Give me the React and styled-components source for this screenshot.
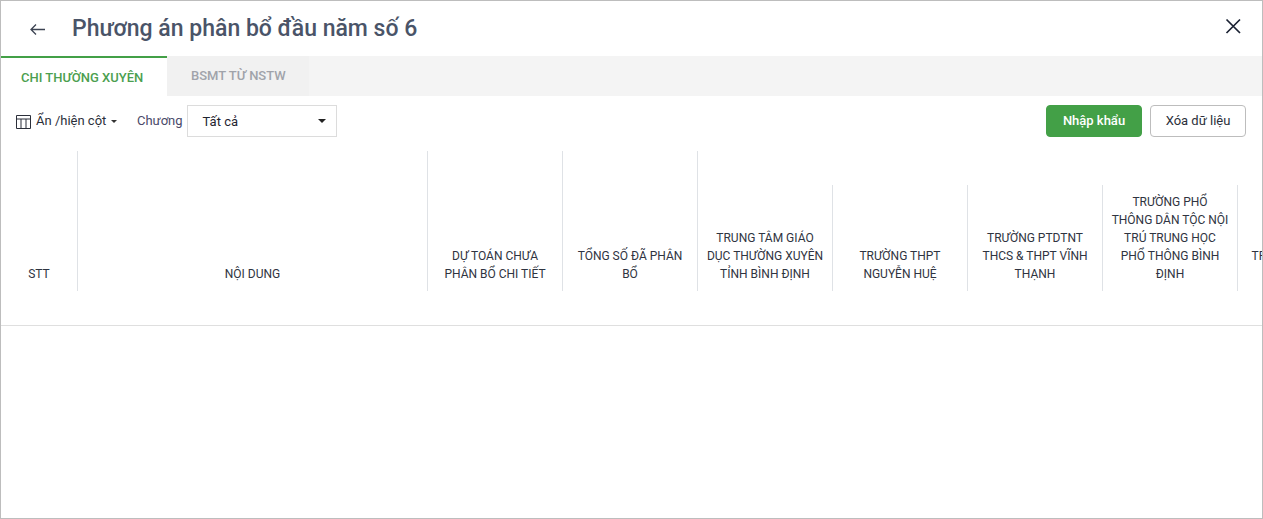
import React from 'react';
import styled, { createGlobalStyle } from 'styled-components';

const GlobalStyle = createGlobalStyle`
  html, body {
    margin: 0;
    padding: 0;
    background: #fff;
    font-family: Roboto, "Liberation Sans", sans-serif;
  }
`;

const Dialog = styled.div`
  box-sizing: border-box;
  width: 1263px;
  height: 519px;
  border: 1px solid #bdbdbd;
  background: #fff;
  overflow: hidden;
  display: flex;
  flex-direction: column;
`;

const Header = styled.header`
  height: 55px;
  flex: none;
  display: flex;
  align-items: center;
  padding: 0 20px 0 28px;
`;

const IconButton = styled.button`
  border: 0;
  padding: 0;
  margin-bottom: ${p => p.$lift || 0}px;
  background: none;
  display: flex;
  cursor: pointer;
`;

const Title = styled.h1`
  margin: 0 0 0 25px;
  flex: 1;
  font-size: 23px;
  font-weight: 500;
  line-height: 30px;
  color: #4a5468;
`;

const Tabs = styled.div`
  height: 40px;
  flex: none;
  display: flex;
  background: #f4f4f4;
`;

const Tab = styled.div`
  box-sizing: border-box;
  width: ${p => p.$width}px;
  padding: ${p => (p.$active ? '12px 0 0 20px' : '12px 0 0 24px')};
  font-size: 13px;
  font-weight: 500;
  line-height: 16px;
  color: ${p => (p.$active ? '#4c9f50' : '#a0a3aa')};
  background: ${p => (p.$active ? '#fff' : '#f1f1f1')};
  border-top: ${p => (p.$active ? '2px solid #43a047' : '0')};
`;

const Toolbar = styled.div`
  height: 32px;
  flex: none;
  margin-top: 9px;
  padding: 0 16px 0 15px;
  display: flex;
  align-items: center;
`;

const ColumnToggle = styled.div`
  display: flex;
  align-items: center;
  font-size: 13px;
  color: #2b2f3a;
`;

const ToggleLabel = styled.span`
  width: 69px;
  margin: 0 6px 2px 5px;
  white-space: nowrap;
`;

const SmallCaret = styled.span`
  width: 0;
  height: 0;
  border-left: 3px solid transparent;
  border-right: 3px solid transparent;
  border-top: 3px solid #333;
  margin-top: 1px;
`;

const FilterLabel = styled.span`
  margin: 0 4px 2px 20px;
  font-size: 13px;
  color: #4a4a6a;
`;

const Select = styled.div`
  box-sizing: border-box;
  width: 150px;
  height: 32px;
  padding: 0 10px 0 15px;
  display: flex;
  align-items: center;
  justify-content: space-between;
  border: 1px solid #dcdcdc;
  font-size: 13px;
  color: #1f2430;
`;

const SelectCaret = styled.span`
  width: 0;
  height: 0;
  border-left: 4px solid transparent;
  border-right: 4px solid transparent;
  border-top: 4px solid #222;
`;

const Actions = styled.div`
  margin-left: auto;
  display: flex;
  gap: 8px;
`;

const Button = styled.button`
  box-sizing: border-box;
  width: 96px;
  height: 32px;
  padding: 0 0 2px;
  border-radius: 4px;
  font-family: inherit;
  font-size: 13px;
  font-weight: ${p => (p.$primary ? 500 : 400)};
  color: ${p => (p.$primary ? '#fff' : '#2b2f3a')};
  background: ${p => (p.$primary ? '#43a047' : '#fff')};
  border: 1px solid ${p => (p.$primary ? '#43a047' : '#bdbdbd')};
`;

const TableWrap = styled.div`
  flex: 1;
  margin-top: 14px;
  overflow: hidden;
`;

const Table = styled.table`
  table-layout: fixed;
  width: 1372px;
  border-collapse: separate;
  border-spacing: 0;
`;

const Th = styled.th`
  box-sizing: border-box;
  padding: 0 8px 8px;
  vertical-align: bottom;
  text-align: center;
  font-size: 12px;
  font-weight: 400;
  line-height: 18px;
  color: #2f3441;
  border-right: ${p => (p.$open ? '0' : '1px solid #dfe2e6')};
`;

const GroupRow = styled.tr`
  height: 34px;
`;

const UnitRow = styled.tr`
  height: 106px;
`;

const Col = styled.col`
  width: ${p => p.$width}px;
`;

const Spacer = styled.td`
  height: 34px;
  padding: 0;
  border-bottom: 1px solid #dfdfdf;
`;

const columns = [
  { width: 77, label: 'STT' },
  { width: 350, label: 'NỘI DUNG' },
  { width: 135, label: 'DỰ TOÁN CHƯA PHÂN BỔ CHI TIẾT' },
  { width: 135, label: 'TỔNG SỐ ĐÃ PHÂN BỔ' },
];

const units = [
  'TRUNG TÂM GIÁO DỤC THƯỜNG XUYÊN TỈNH BÌNH ĐỊNH',
  'TRƯỜNG THPT NGUYỄN HUỆ',
  'TRƯỜNG PTDTNT THCS & THPT VĨNH THẠNH',
  'TRƯỜNG PHỔ THÔNG DÂN TỘC NỘI TRÚ TRUNG HỌC PHỔ THÔNG BÌNH ĐỊNH',
  'TRƯỜNG THPT QUY NHƠN',
];

const BackIcon = () => (
  <svg width="18" height="18" viewBox="0 0 18 18" fill="none" stroke="#3c4352" strokeWidth="1.3">
    <path d="M2 9.5h14M7 4.5l-5 5 5 5" />
  </svg>
);

const CloseIcon = () => (
  <svg width="18" height="18" viewBox="0 0 18 18" fill="none" stroke="#1b2233" strokeWidth="1.7">
    <path d="M2.5 2.5l13.5 13.5M16 2.5L2.5 16" />
  </svg>
);

const TableIcon = () => (
  <svg width="15" height="15" viewBox="0 0 15 15" fill="none" stroke="#2b2f3a" strokeWidth="1">
    <path d="M.5 1.5h14v13H.5zM.5 5h14M5 5v9.5M10 5v9.5" />
  </svg>
);

const App = () => {
  return (
    <Dialog>
      <GlobalStyle />
      <Header>
        <IconButton><BackIcon /></IconButton>
        <Title>Phương án phân bổ đầu năm số 6</Title>
        <IconButton $lift={6}><CloseIcon /></IconButton>
      </Header>
      <Tabs>
        <Tab $active $width={166}>CHI THƯỜNG XUYÊN</Tab>
        <Tab $width={142}>BSMT TỪ NSTW</Tab>
      </Tabs>
      <Toolbar>
        <ColumnToggle>
          <TableIcon />
          <ToggleLabel>Ẩn /hiện cột</ToggleLabel>
          <SmallCaret />
        </ColumnToggle>
        <FilterLabel>Chương</FilterLabel>
        <Select>
          Tất cả
          <SelectCaret />
        </Select>
        <Actions>
          <Button $primary>Nhập khẩu</Button>
          <Button>Xóa dữ liệu</Button>
        </Actions>
      </Toolbar>
      <TableWrap>
        <Table>
          <colgroup>
            {columns.map(c => (
              <Col key={c.label} $width={c.width} />
            ))}
            {units.map(u => (
              <Col key={u} $width={135} />
            ))}
          </colgroup>
          <thead>
            <GroupRow>
              {columns.map(c => (
                <Th key={c.label} rowSpan={2}>{c.label}</Th>
              ))}
              <Th colSpan={units.length} $open />
            </GroupRow>
            <UnitRow>
              {units.map(u => (
                <Th key={u}>{u}</Th>
              ))}
            </UnitRow>
          </thead>
          <tbody>
            <tr>
              <Spacer colSpan={columns.length + units.length} />
            </tr>
          </tbody>
        </Table>
      </TableWrap>
    </Dialog>
  );
};

export default App;
